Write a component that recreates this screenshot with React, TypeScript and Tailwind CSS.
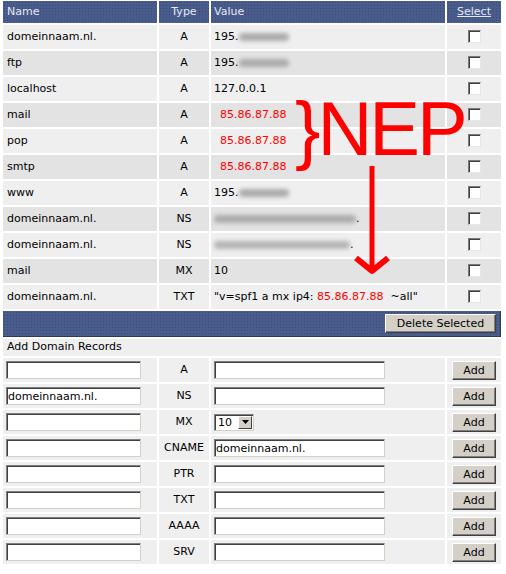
import React from "react";

type Rec = { name: string; type: string; value: React.ReactNode };

function Smudge({ w, wavy }: { w: number; wavy?: boolean }) {
  return (
    <span
      className={`inline-block align-middle h-[8px] rounded-full blur-[2px] ${wavy ? "bg-[#b4b4b4]" : "bg-[#ababab]"}`}
      style={{ width: w }}
    />
  );
}

const red = "text-[#ff0000]";

const records: Rec[] = [
  { name: "domeinnaam.nl.", type: "A", value: <>195.<Smudge w={50} /></> },
  { name: "ftp", type: "A", value: <>195.<Smudge w={50} /></> },
  { name: "localhost", type: "A", value: "127.0.0.1" },
  { name: "mail", type: "A", value: <span className={`pl-[6px] ${red}`}>85.86.87.88</span> },
  { name: "pop", type: "A", value: <span className={`pl-[6px] ${red}`}>85.86.87.88</span> },
  { name: "smtp", type: "A", value: <span className={`pl-[6px] ${red}`}>85.86.87.88</span> },
  { name: "www", type: "A", value: <>195.<Smudge w={50} /></> },
  { name: "domeinnaam.nl.", type: "NS", value: <><Smudge w={142} />.</> },
  { name: "domeinnaam.nl.", type: "NS", value: <><Smudge w={136} wavy />.</> },
  { name: "mail", type: "MX", value: "10" },
  {
    name: "domeinnaam.nl.",
    type: "TXT",
    value: (
      <>
        "v=spf1 a mx ip4: <span className={red}>85.86.87.88</span>&nbsp; ~all"
      </>
    ),
  },
];

const addTypes = ["A", "NS", "MX", "CNAME", "PTR", "TXT", "AAAA", "SRV"];

function Check() {
  return (
    <span className="inline-block align-middle w-[13px] h-[13px] bg-white border border-t-[#7a7a7a] border-l-[#7a7a7a] border-b-[#e6e6e6] border-r-[#e6e6e6] shadow-[inset_1px_1px_0_#404040]" />
  );
}

function TextBox({ w, value }: { w: number; value?: string }) {
  return (
    <input
      readOnly
      value={value ?? ""}
      style={{ width: w }}
      className="align-middle h-[18px] bg-white px-[1px] text-[11px] text-black outline-none border border-t-[#808080] border-l-[#808080] border-b-[#d4d0c8] border-r-[#d4d0c8] shadow-[inset_1px_1px_0_#404040] font-['DejaVu_Sans',Verdana,sans-serif]"
    />
  );
}

function Btn({ children, w }: { children: React.ReactNode; w: number }) {
  return (
    <button
      style={{ width: w }}
      className="align-middle h-[19px] bg-[#d4d0c8] text-[11px] text-black leading-none border border-t-white border-l-white border-b-[#404040] border-r-[#404040] shadow-[inset_-1px_-1px_0_#808080] font-['DejaVu_Sans',Verdana,sans-serif]"
    >
      {children}
    </button>
  );
}

function MxSelect() {
  return (
    <span className="inline-flex align-middle items-center w-[40px] h-[17px] bg-white border border-t-[#808080] border-l-[#808080] border-b-[#d4d0c8] border-r-[#d4d0c8] shadow-[inset_1px_1px_0_#404040]">
      <span className="flex-1 pl-[3px] text-[11px] leading-none">10</span>
      <span className="flex items-center justify-center w-[14px] h-[13px] mr-[1px] bg-[#d4d0c8] border border-t-white border-l-white border-b-[#404040] border-r-[#404040]">
        <svg width="7" height="4" viewBox="0 0 7 4">
          <path d="M0 0h7L3.5 4z" fill="#000" />
        </svg>
      </span>
    </span>
  );
}

const blue =
  "bg-[#4a5c8c] bg-[radial-gradient(circle,#3a4b78_0.7px,transparent_0.9px)] bg-size-[3px_3px]";

export default function App() {
  const th = `h-[22px] p-0 text-[11px] font-normal text-[#e4e8f2] ${blue}`;
  return (
    <div className="relative min-h-[574px] bg-white font-['DejaVu_Sans',Verdana,sans-serif] text-black">
      <table className="table-fixed w-[502px] ml-px -mt-px border-separate border-spacing-[2px] text-[11px]">
        <colgroup>
          <col className="w-[154px]" />
          <col className="w-[50px]" />
          <col className="w-[234px]" />
          <col className="w-[54px]" />
        </colgroup>
        <thead>
          <tr>
            <th className={`${th} text-left pl-[4px]`}>Name</th>
            <th className={`${th} text-center`}>Type</th>
            <th className={`${th} text-left pl-[3px]`}>Value</th>
            <th className={`${th} text-center`}>
              <span className="underline">Select</span>
            </th>
          </tr>
        </thead>
        <tbody>
          {records.map((r, i) => {
            const bg = i % 2 === 0 ? "bg-[#efefef]" : "bg-[#e3e3e3]";
            return (
              <tr key={i}>
                <td className={`${bg} h-[24px] p-0 pl-[4px] whitespace-nowrap`}>{r.name}</td>
                <td className={`${bg} h-[24px] p-0 text-center`}>{r.type}</td>
                <td className={`${bg} h-[24px] p-0 pl-[3px] whitespace-nowrap`}>{r.value}</td>
                <td className={`${bg} h-[24px] p-0 text-center`}>
                  <Check />
                </td>
              </tr>
            );
          })}
          <tr>
            <td colSpan={4} className={`h-[26px] p-0 pr-[4px] text-right border-b border-r border-[#2c3a5c] ${blue}`}>
              <Btn w={111}>Delete Selected</Btn>
            </td>
          </tr>
          <tr>
            <td colSpan={4} className="h-[17px] p-0 pl-[4px] bg-[#efefef]">
              Add Domain Records
            </td>
          </tr>
          {addTypes.map((t) => (
            <tr key={t}>
              <td className="h-[24px] p-0 pl-[3px] bg-[#efefef]">
                <TextBox w={135} value={t === "NS" ? "domeinnaam.nl." : ""} />
              </td>
              <td className="h-[24px] p-0 text-center bg-[#efefef]">{t}</td>
              <td className="h-[24px] p-0 pl-[3px] bg-[#efefef]">
                {t === "MX" ? <MxSelect /> : <TextBox w={171} value={t === "CNAME" ? "domeinnaam.nl." : ""} />}
              </td>
              <td className="h-[24px] p-0 text-center bg-[#efefef]">
                <Btn w={44}>Add</Btn>
              </td>
            </tr>
          ))}
        </tbody>
      </table>

      {/* annotation drawn over the table */}
      <div className="absolute left-[295px] top-[92px] text-[76px] leading-none tracking-[-3px] text-[#ff0000] font-['Liberation_Sans',Arial,sans-serif] whitespace-nowrap pointer-events-none">
        {"}"}NEP
      </div>
      <svg className="absolute left-0 top-0 pointer-events-none" width="506" height="574">
        <path d="M372 167V270" stroke="#ff0000" strokeWidth="5" />
        <path d="M356 259L372 272L388 259" fill="none" stroke="#ff0000" strokeWidth="6" strokeLinejoin="round" />
      </svg>
    </div>
  );
}
